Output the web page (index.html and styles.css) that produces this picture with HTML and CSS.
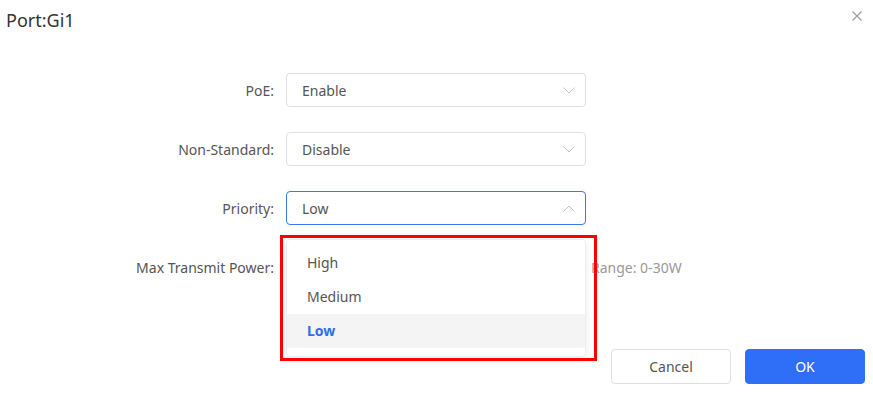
FILE: index.html
```html
<!DOCTYPE html>
<html>
<head>
<meta charset="utf-8">
<link rel="stylesheet" href="styles.css">
</head>
<body>
<div class="dialog">
  <div class="header">
    <div class="title">Port:Gi1</div>
    <div class="close">
      <svg width="10" height="10" viewBox="0 0 10 10"><path d="M0.5 0.5L9.5 9.5M9.5 0.5L0.5 9.5" stroke="#9a9ca3" stroke-width="1.2" fill="none"/></svg>
    </div>
  </div>
  <div class="form">
    <div class="row">
      <div class="label">PoE:</div>
      <div class="select">
        <span>Enable</span>
        <svg class="arrow" width="12" height="7" viewBox="0 0 12 7"><path d="M0.5 0.5L6 6L11.5 0.5" stroke="#c0c4cc" stroke-width="1" fill="none"/></svg>
      </div>
    </div>
    <div class="row">
      <div class="label">Non-Standard:</div>
      <div class="select">
        <span>Disable</span>
        <svg class="arrow" width="12" height="7" viewBox="0 0 12 7"><path d="M0.5 0.5L6 6L11.5 0.5" stroke="#c0c4cc" stroke-width="1" fill="none"/></svg>
      </div>
    </div>
    <div class="row">
      <div class="label">Priority:</div>
      <div class="select focus">
        <span>Low</span>
        <svg class="arrow" width="12" height="7" viewBox="0 0 12 7"><path d="M0.5 6.5L6 1L11.5 6.5" stroke="#c0c4cc" stroke-width="1" fill="none"/></svg>
        <div class="dropdown">
          <div class="item">High</div>
          <div class="item">Medium</div>
          <div class="item active">Low</div>
        </div>
        <div class="highlight"></div>
      </div>
    </div>
    <div class="row">
      <div class="label">Max Transmit Power:</div>
      <div class="select input"></div>
      <div class="hint">Range: 0-30W</div>
    </div>
  </div>
  <div class="footer">
    <button class="btn cancel">Cancel</button>
    <button class="btn ok">OK</button>
  </div>
</div>
</body>
</html>
```

FILE: styles.css
```css
* { box-sizing: border-box; }
html, body { margin: 0; padding: 0; background: #fff; }
body {
  font-family: "Noto Sans", "Liberation Sans", sans-serif;
  color: #555;
  font-size: 14px;
}
.dialog {
  width: 873px;
  height: 395px;
  position: relative;
}
.header {
  display: flex;
  justify-content: space-between;
  align-items: flex-start;
  padding: 6px 11px 0 6px;
  height: 73px;
}
.title {
  font-size: 18px;
  color: #333;
  line-height: 28px;
}
.close {
  padding-top: 5px;
  line-height: 0;
}
.form {
  display: flex;
  flex-direction: column;
  gap: 25px;
}
.row {
  display: flex;
  align-items: center;
  height: 34px;
}
.label {
  width: 286px;
  padding-right: 12px;
  text-align: right;
  color: #555;
}
.select {
  position: relative;
  width: 300px;
  height: 34px;
  border: 1px solid #dcdfe6;
  border-radius: 4px;
  display: flex;
  align-items: center;
  justify-content: space-between;
  padding: 0 10px 0 15px;
  color: #555;
}
.select.focus { border-color: #3a76f0; }
.arrow { display: block; }
.hint {
  margin-left: 5px;
  color: #999;
}
.dropdown {
  position: absolute;
  left: -1px;
  top: 47px;
  width: 300px;
  background: #fff;
  border: 1px solid #eceef2;
  border-radius: 4px;
  box-shadow: 0 2px 8px rgba(0,0,0,0.08);
  padding: 6px 0 8px;
  z-index: 2;
}
.item {
  height: 34px;
  line-height: 33px;
  padding-left: 20px;
  color: #555;
}
.item.active {
  background: #f4f4f5;
  color: #2f6bf3;
  font-weight: bold;
}
.highlight {
  position: absolute;
  left: -7px;
  top: 43px;
  width: 317px;
  height: 126px;
  border: 3px solid #ff0000;
  z-index: 3;
  pointer-events: none;
}
.footer {
  display: flex;
  justify-content: flex-end;
  gap: 14px;
  padding: 65px 8px 0 0;
}
.btn {
  width: 120px;
  height: 35px;
  border-radius: 4px;
  font-family: inherit;
  font-size: 14px;
}
.cancel {
  background: #fff;
  border: 1px solid #dcdfe6;
  color: #555;
}
.ok {
  background: #2f6ef6;
  border: 1px solid #2f6ef6;
  color: #fff;
}
```
